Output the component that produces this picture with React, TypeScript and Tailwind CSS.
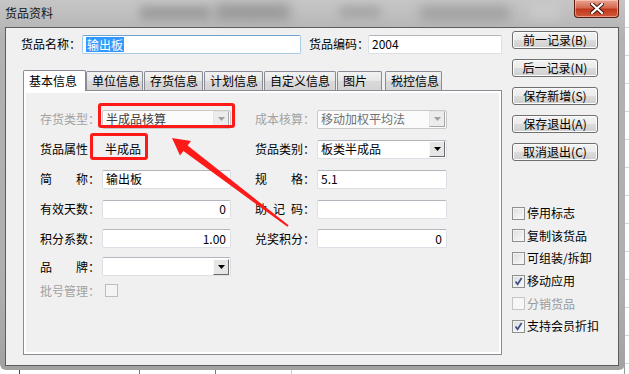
import React from "react";

const FONT = "font-['SimSun','Noto_Sans_CJK_SC',sans-serif]";

function TextBox({
  w,
  value,
  right = false,
  focus = false,
}: {
  w: string;
  value?: React.ReactNode;
  right?: boolean;
  focus?: boolean;
}) {
  return (
    <div
      className={`${w} shrink-0 h-[19px] rounded-[2px] border bg-white flex items-center px-[3px] whitespace-nowrap ${
        focus
          ? "border-[#a9cde6] border-t-[#6fa2cf]"
          : "border-[#dcdfe5] border-t-[#b3b6bd]"
      } ${right ? "justify-end pr-[4px]" : ""}`}
    >
      {value}
    </div>
  );
}

function DropArrow({ disabled = false }: { disabled?: boolean }) {
  return (
    <div
      className={`w-[16px] h-[16px] border flex items-center justify-center ${
        disabled
          ? "border-[#e4e4e4] border-r-[#a8a8a8] border-b-[#a8a8a8] bg-[#ececec]"
          : "border-[#fafafa] border-r-[#6a6a6a] border-b-[#6a6a6a] bg-[#e6e6e6]"
      }`}
    >
      <svg width="7" height="4" viewBox="0 0 7 4">
        <polygon points="0,0 7,0 3.5,4" fill={disabled ? "#a0a0a0" : "#000"} />
      </svg>
    </div>
  );
}

function Combo({
  w,
  value,
  disabled = false,
  textColor = "text-black",
}: {
  w: string;
  value?: string;
  disabled?: boolean;
  textColor?: string;
}) {
  return (
    <div
      className={`${w} shrink-0 h-[19px] rounded-[2px] border ${
        disabled ? "border-[#c9c9c9] bg-[#fbfbfb]" : "border-[#dcdfe5] border-t-[#b3b6bd] bg-white"
      } flex items-center justify-between pl-[3px] pr-[1px]`}
    >
      <span className={`${textColor} whitespace-nowrap`}>{value}</span>
      <DropArrow disabled={disabled} />
    </div>
  );
}

function Label({
  chars,
  gray = false,
}: {
  chars: string[];
  gray?: boolean;
}) {
  return (
    <div className={`w-[62px] flex shrink-0 whitespace-nowrap ${gray ? "text-[#a2a2a2]" : "text-black"}`}>
      <span className="w-[48px] flex justify-between">
        {chars.map((c, i) => (
          <span key={i}>{c}</span>
        ))}
      </span>
      <span>：</span>
    </div>
  );
}

function Check({
  label,
  checked = false,
  disabled = false,
}: {
  label: string;
  checked?: boolean;
  disabled?: boolean;
}) {
  return (
    <div className="h-[22.6px] flex items-center gap-[2px] whitespace-nowrap">
      <div
        className={`w-[13px] h-[13px] shrink-0 border flex items-center justify-center ${
          disabled
            ? "border-[#c6c6c6] bg-[#f7f7f7]"
            : "border-[#8e8f8f] bg-[linear-gradient(135deg,#dcdcdc,#fbfbfb)] shadow-[inset_0_0_0_1px_#f4f4f4]"
        }`}
      >
        {checked && (
          <svg width="9" height="9" viewBox="0 0 9 9">
            <path d="M1.5 4.5 L3.6 7.2 L7.6 1" stroke="#3a4f8c" strokeWidth="1.7" fill="none" />
          </svg>
        )}
      </div>
      <span className={disabled ? "text-[#9a9a9a]" : "text-black"}>{label}</span>
    </div>
  );
}

function WinButton({ children }: { children: React.ReactNode }) {
  return (
    <button
      type="button"
      className="w-[86px] h-[18px] rounded-[3px] border border-[#707070] bg-[linear-gradient(#f3f3f3_0%,#ebebeb_50%,#dddddd_50%,#cfcfcf_100%)] shadow-[inset_0_0_0_1px_#fcfcfc] flex items-center justify-center text-black leading-none whitespace-nowrap"
    >
      {children}
    </button>
  );
}

const tabs: { label: string; w: string; ml: string }[] = [
  { label: "单位信息", w: "w-[57px]", ml: "ml-0" },
  { label: "存货信息", w: "w-[59px]", ml: "ml-[1px]" },
  { label: "计划信息", w: "w-[59px]", ml: "ml-[1px]" },
  { label: "自定义信息", w: "w-[72px]", ml: "ml-[1px]" },
  { label: "图片", w: "w-[45px]", ml: "ml-[1px]" },
  { label: "税控信息", w: "w-[57px]", ml: "ml-[3px]" },
];

export default function App() {
  return (
    <div className={`relative w-[629px] h-[374px] overflow-hidden bg-white text-[12px] ${FONT}`}>
      {/* background app grid peeking out */}
      <div className="absolute right-0 top-0 w-[5px] h-full border-l border-[#9a9a9a] bg-[repeating-linear-gradient(#ffffff_0px,#ffffff_27px,#cfd6df_27px,#cfd6df_28px)]" />
      <div className="absolute left-0 bottom-0 w-full h-[5px] flex">
        <div className="w-[20px] border-r border-[#444]" />
        <div className="w-[120px] border-r border-[#777]" />
        <div className="w-[76px] border-r border-[#777]" />
        <div className="w-[76px] border-r border-[#ccc]" />
      </div>

      {/* window frame */}
      <div className="relative w-[625px] h-[370px] rounded-b-[6px] bg-[linear-gradient(#c6c6c6,#b2b2b2_10%,#aeaeae_80%,#a2a2a2)] overflow-hidden">
        {/* title bar */}
        <div className="relative h-[27px] flex items-center pl-[5px]">
          <div className="absolute left-[140px] top-[6px] w-[70px] h-[14px] bg-[#8f8f8f] blur-[5px] opacity-70" />
          <div className="absolute left-[215px] top-[4px] w-[75px] h-[16px] bg-[#7e7e7e] blur-[6px] opacity-60" />
          <div className="absolute left-[340px] top-[6px] w-[40px] h-[12px] bg-[#9a9a9a] blur-[5px] opacity-70" />
          <div className="absolute left-[420px] top-[6px] w-[90px] h-[14px] bg-[#8a8a8a] blur-[6px] opacity-60" />
          <div className="absolute left-[530px] top-[4px] w-[30px] h-[16px] bg-[#d0d0d0] blur-[5px] opacity-60" />
          <span className="relative text-[#151515] pb-[1px]">货品资料</span>
          {/* close button */}
          <div className="absolute left-[574px] top-0 w-[45px] h-[18px] rounded-b-[4px] border border-t-0 border-[#5a1a0e] bg-[linear-gradient(#e9a493_0%,#d46a52_45%,#c1391c_55%,#cf5a3c_100%)] shadow-[inset_0_0_0_1px_rgba(255,220,210,0.5)] flex items-center justify-center">
            <svg width="14" height="11" viewBox="0 0 14 11">
              <path d="M2 1 L12 10 M12 1 L2 10" stroke="#3b1208" strokeWidth="4" strokeLinecap="square" />
              <path d="M2 1 L12 10 M12 1 L2 10" stroke="#ffffff" strokeWidth="2.2" strokeLinecap="square" />
            </svg>
          </div>
        </div>

        {/* dialog body */}
        <div className="ml-[5px] w-[614px] h-[339px] border border-[#5c5c5c] bg-[#f0f0f0] flex">
          {/* left section */}
          <div className="w-[506px] shrink-0 flex flex-col">
            <div className="flex items-center pt-[6px] pl-[15px] h-[26px] whitespace-nowrap">
              <span className="w-[61px] shrink-0">货品名称：</span>
              <TextBox
                w="w-[219px]"
                focus
                value={<span className="bg-[#3399ff] text-white px-[1px] leading-[15px]">输出板</span>}
              />
              <span className="ml-[8px] w-[59px] shrink-0">货品编码：</span>
              <TextBox w="w-[134px]" value="2004" />
            </div>

            {/* tabs */}
            <div className="ml-[17px] mt-[15px] flex items-end h-[21px] whitespace-nowrap">
              <div className="relative z-10 w-[63px] h-[21px] -mb-px border border-b-0 border-[#898c95] bg-white pl-[5px] flex items-center rounded-t-[2px]">
                基本信息
              </div>
              {tabs.map((t) => (
                <div
                  key={t.label}
                  className={`${t.w} ${t.ml} h-[19px] border border-b-0 border-[#898c95] bg-[linear-gradient(#f2f2f2,#e6e6e6_50%,#d9d9d9_50%,#d4d4d4)] pl-[5px] flex items-center rounded-t-[2px]`}
                >
                  {t.label}
                </div>
              ))}
            </div>

            {/* tab panel */}
            <div className="ml-[17px] w-[479px] h-[265px] border border-[#898c95] bg-[#f0f0f0] shadow-[inset_0_0_0_2px_#ffffff] flex flex-col pt-[13px] pl-[16px]">
              <div className="h-[30px] flex items-center">
                <Label chars={["存", "货", "类", "型"]} gray />
                <Combo w="w-[129px]" value="半成品核算" disabled textColor="text-[#3c3c3c]" />
                <div className="ml-[24px]">
                  <Label chars={["成", "本", "核", "算"]} gray />
                </div>
                <Combo w="w-[130px]" value="移动加权平均法" disabled textColor="text-[#707070]" />
              </div>
              <div className="h-[30px] flex items-center">
                <Label chars={["货", "品", "属", "性"]} />
                <span className="w-[129px] shrink-0 pl-[3px]">半成品</span>
                <div className="ml-[24px]">
                  <Label chars={["货", "品", "类", "别"]} />
                </div>
                <Combo w="w-[130px]" value="板类半成品" />
              </div>
              <div className="h-[30px] flex items-center">
                <Label chars={["简", "称"]} />
                <TextBox w="w-[129px]" value="输出板" />
                <div className="ml-[24px]">
                  <Label chars={["规", "格"]} />
                </div>
                <TextBox w="w-[130px]" value="5.1" />
              </div>
              <div className="h-[30px] flex items-center">
                <Label chars={["有", "效", "天", "数"]} />
                <TextBox w="w-[129px]" value="0" right />
                <div className="ml-[24px]">
                  <Label chars={["助", "记", "码"]} />
                </div>
                <TextBox w="w-[130px]" />
              </div>
              <div className="h-[29px] flex items-center">
                <Label chars={["积", "分", "系", "数"]} />
                <TextBox w="w-[129px]" value="1.00" right />
                <div className="ml-[24px]">
                  <Label chars={["兑", "奖", "积", "分"]} />
                </div>
                <TextBox w="w-[130px]" value="0" right />
              </div>
              <div className="h-[27px] flex items-center">
                <Label chars={["品", "牌"]} />
                <Combo w="w-[129px]" />
              </div>
              <div className="h-[21px] flex items-center">
                <Label chars={["批", "号", "管", "理"]} gray />
                <div className="ml-[3px] w-[13px] h-[13px] border border-[#bdbdbd] bg-[#f4f4f4]" />
              </div>
            </div>
          </div>

          {/* right section */}
          <div className="flex flex-col pt-[3px]">
            <div className="flex flex-col gap-[10px]">
              <WinButton>前一记录(B)</WinButton>
              <WinButton>后一记录(N)</WinButton>
              <WinButton>保存新增(S)</WinButton>
              <WinButton>保存退出(A)</WinButton>
              <WinButton>取消退出(C)</WinButton>
            </div>
            <div className="mt-[41px] flex flex-col">
              <Check label="停用标志" />
              <Check label="复制该货品" />
              <Check label="可组装/拆卸" />
              <Check label="移动应用" checked />
              <Check label="分销货品" disabled />
              <Check label="支持会员折扣" checked />
            </div>
          </div>
        </div>
      </div>

      {/* red annotations */}
      <div className="absolute left-[98px] top-[103px] w-[137px] h-[25px] border-[3px] border-[#ff1a1a] rounded-[3px]" />
      <div className="absolute left-[90px] top-[133px] w-[58px] h-[27px] border-[3px] border-[#ff1a1a] rounded-[3px]" />
      <svg className="absolute left-0 top-0" width="629" height="374" viewBox="0 0 629 374">
        <polygon
          points="172,138 191,141 187.6,145.5 288.6,225.2 287.4,226.8 183.4,151.1 180,155.5"
          fill="#ff1a1a"
        />
      </svg>
    </div>
  );
}
